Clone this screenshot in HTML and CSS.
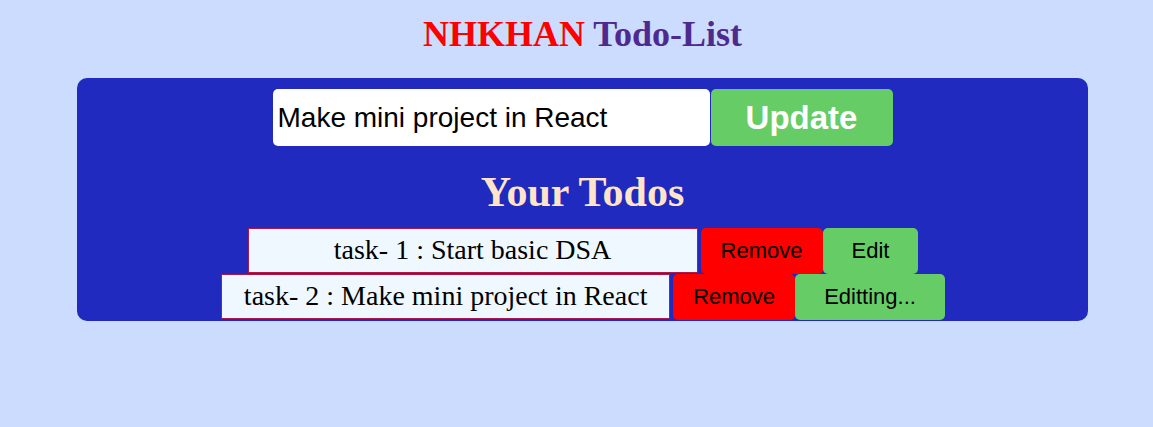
FILE: index.html
```html
<!DOCTYPE html>
<html>
<head>
<meta charset="utf-8">
<link rel="stylesheet" href="styles.css">
</head>
<body>
<h1 class="title"><span class="brand">NHKHAN</span> <span class="app">Todo-List</span></h1>
<div class="panel">
  <div class="form">
    <input class="field" type="text" value="Make mini project in React">
    <button class="update">Update</button>
  </div>
  <h2 class="heading">Your Todos</h2>
  <div class="row">
    <div class="task">task- 1 : Start basic DSA</div>
    <button class="remove">Remove</button>
    <button class="edit">Edit</button>
  </div>
  <div class="row">
    <div class="task task-wide">task- 2 : Make mini project in React</div>
    <button class="remove">Remove</button>
    <button class="edit">Editting...</button>
  </div>
</div>
</body>
</html>
```
FILE: styles.css
```css
html, body {
  margin: 0;
  padding: 0;
  background: #cbdcff;
}
body {
  font-family: "Liberation Serif", "Times New Roman", serif;
}
.title {
  margin: 14px 0 24px 12px;
  font-size: 36px;
  line-height: 40px;
  font-weight: bold;
  text-align: center;
}
.brand { color: #fe0000; }
.app { color: #4e2a8e; }
.panel {
  margin-left: 77px;
  width: 1011px;
  background: #202abe;
  border-radius: 10px;
  padding-top: 11px;
  padding-bottom: 1px;
}
.form {
  display: flex;
  justify-content: center;
  gap: 1px;
}
.field {
  box-sizing: border-box;
  width: 437px;
  height: 57px;
  border: none;
  border-radius: 5px;
  padding: 0 5px;
  font-family: "Liberation Sans", Arial, sans-serif;
  font-size: 28px;
  color: #000;
  background: #fff;
  outline: none;
}
.update {
  box-sizing: border-box;
  width: 182px;
  height: 57px;
  border: none;
  border-radius: 5px;
  background: #66cd66;
  color: #fff;
  font-family: "Liberation Sans", Arial, sans-serif;
  font-weight: bold;
  font-size: 33px;
  padding: 0;
}
.heading {
  margin: 23px 0 13px;
  font-size: 42px;
  line-height: 46px;
  font-weight: bold;
  text-align: center;
  color: #ffe4c9;
}
.row {
  display: flex;
  justify-content: center;
  height: 46px;
  padding-left: 1px;
}
.task {
  box-sizing: border-box;
  width: 450px;
  height: 45px;
  margin-right: 3px;
  background: #f0f8ff;
  border: 1px solid #b01848;
  font-size: 28px;
  line-height: 41px;
  text-align: center;
  color: #000;
}
.task-wide { width: 449px; }
.remove, .edit {
  box-sizing: border-box;
  height: 46px;
  border: none;
  border-radius: 5px;
  font-family: "Liberation Sans", Arial, sans-serif;
  font-size: 22px;
  color: #000;
}
.remove {
  width: 122px;
  padding: 0;
  background: #fe0000;
}
.edit {
  padding: 0 29px;
  background: #66cd66;
}
```
